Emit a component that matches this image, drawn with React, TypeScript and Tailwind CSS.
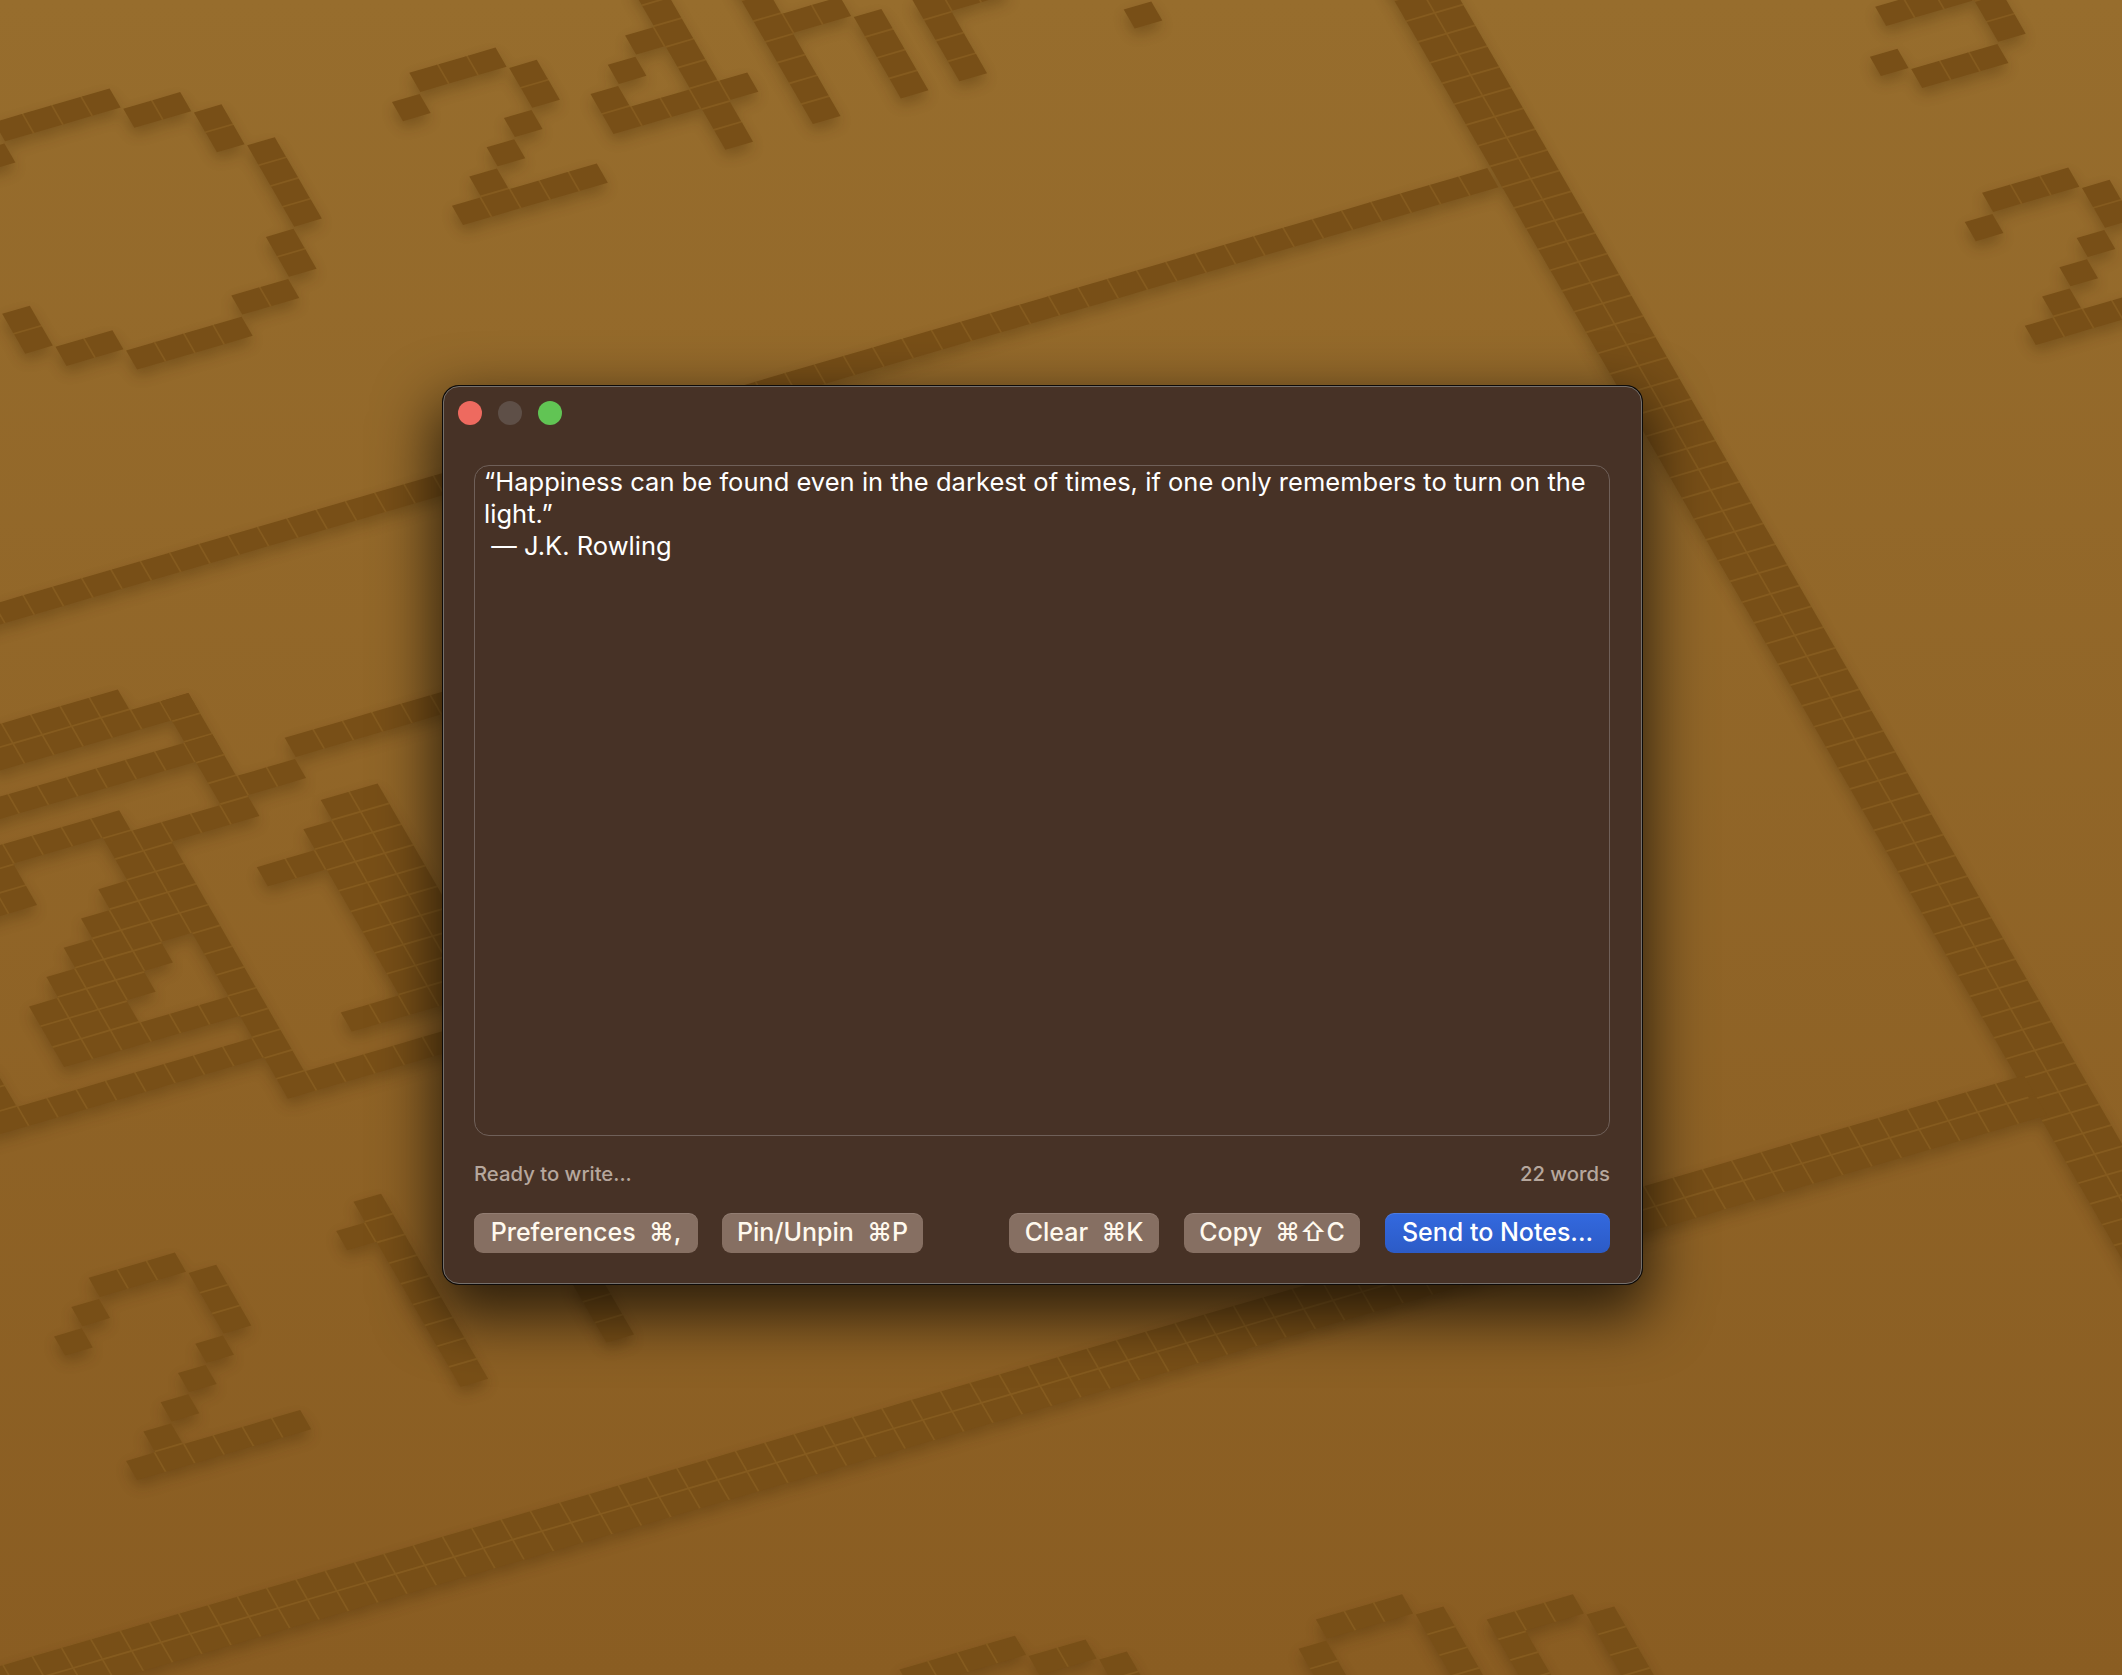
import React from "react";

const U = [29.3, -8.55];
const V = [12, 20.75];
const SU = 0.47;
const SV = 0.46;

type Group = { x: number; y: number; cells: [number, number][] };

const parse = (s: string): [number, number][] =>
  s
    .trim()
    .split(/\s+/)
    .map((p) => {
      const [a, b] = p.split(",").map(Number);
      return [a, b] as [number, number];
    });

const rangeI = (from: number, to: number, j: number): [number, number][] => {
  const out: [number, number][] = [];
  for (let i = from; i <= to; i++) out.push([i, j]);
  return out;
};
const rangeJ = (i: number, from: number, to: number): [number, number][] => {
  const out: [number, number][] = [];
  for (let j = from; j <= to; j++) out.push([i, j]);
  return out;
};

const TWO = "0,0 1,0 2,0 3,1 3,2 2,3 1,4 0,5 -1,6 0,6 1,6 2,6 3,6 -1,1";

const groups: Group[] = [
  { x: 13.4, y: 127.7, cells: parse("0,0 1,0 2,0 3,0 4,1 5,1 6,2 6,3 7,4 7,5 7,6 7,7 6,8 6,9 5,10 4,10 3,11 2,11 1,11 0,11 -1,10 -2,10 -3,9 -3,8 -1,1") },
  { x: 428.6, y: 78.3, cells: parse(TWO) },
  { x: 661.7, y: 11.7, cells: parse("0,-1 0,0 0,1 -1,1 0,2 -2,2 0,3 -3,3 0,4 1,4 -1,4 -2,4 -3,4 0,5 0,6") },
  { x: 761.2, y: 6.7, cells: parse("0,-1 0,0 0,1 0,2 0,3 0,4 0,5 1,1 2,1 3,2 3,3 3,4 3,5 5,2 5,3 5,4 5,5 6,2 7,2") },
  { x: 1143, y: 15, cells: parse("0,0") },
  { x: 1894.5, y: 12.3, cells: parse("0,0 1,0 2,0 3,0 3,1 3,2 -1,2 0,3 1,3 2,3") },
  { x: 2001.4, y: 198.3, cells: parse(TWO) },
  { x: 1455.3, y: 19, cells: [...rangeJ(-1, -2, 60), ...rangeJ(0, -2, 60)] },
  { x: 1479, y: 181.7, cells: rangeI(-52, 0, 0) },
  { x: 843.6, y: 1431, cells: [...rangeI(-32, 40, 0), ...rangeI(-32, 40, 1)] },
  {
    x: 304,
    y: 743.3,
    cells: [
      ...rangeI(0, 6, 0),
      ...rangeI(-9, -5, -4),
      ...rangeI(-9, -3, -3),
      ...rangeJ(-3, -3, 2),
      ...rangeI(-10, -3, -1),
      ...rangeI(-2, -1, 1),
      ...rangeI(-11, -7, 1),
      ...rangeI(-7, -4, 2),
      ...rangeJ(-7, 3, 6),
      ...rangeJ(-6, 3, 14),
      ...rangeJ(-8, 4, 7),
      ...rangeJ(-9, 5, 8),
      ...rangeJ(-10, 6, 10),
      ...rangeJ(-11, 7, 10),
      ...rangeJ(-12, 8, 10),
      ...rangeI(-9, -7, 10),
      ...parse("-11,2 -11,3 -12,3 -15,10 -15,11"),
      ...rangeI(-16, -7, 12),
      ...rangeI(-5, 1, 14),
      ...rangeJ(-1, 4, 12),
      ...rangeJ(0, 3, 12),
      ...rangeJ(1, 3, 12),
      ...parse("-3,5 -2,5 -3,12 -2,12"),
    ],
  },
  { x: 108, y: 1283.3, cells: parse("0,0 1,0 2,0 3,1 3,2 3,3 2,4 1,5 0,6 -1,7 -2,8 -1,8 0,8 1,8 2,8 3,8 -1,1 -2,2") },
  { x: 372.8, y: 1207.3, cells: [...rangeJ(0, 0, 8), [-1, 1]] },
  { x: 602.7, y: 1308.3, cells: parse("0,-1 0,0 0,1") },
  { x: 1006.7, y: 1649.3, cells: parse("-3,0 -2,0 -1,0 0,0 1,1 2,1 3,2 3,3") },
  { x: 1335.2, y: 1625, cells: parse("0,0 1,0 2,0 3,1 3,2 3,3 3,4 -1,1 -1,2 -1,3") },
  { x: 1506, y: 1625, cells: parse("0,0 1,0 2,0 3,1 3,2 3,3 3,4 0,1 0,2 0,3") },
];

function quad(g: Group, ci: number, cj: number, a: number, b: number) {
  const cx = g.x + ci * U[0] + cj * V[0];
  const cy = g.y + ci * U[1] + cj * V[1];
  const c = (p: number, q: number) =>
    `${(cx + p * a * U[0] + q * b * V[0]).toFixed(1)},${(cy + p * a * U[1] + q * b * V[1]).toFixed(1)}`;
  return `${c(-1, -1)} ${c(1, -1)} ${c(1, 1)} ${c(-1, 1)}`;
}

function gapStrips(g: Group) {
  const has = new Set(g.cells.map(([i, j]) => `${i},${j}`));
  const out: string[] = [];
  for (const [i, j] of g.cells) {
    const r = has.has(`${i + 1},${j}`);
    const d = has.has(`${i},${j + 1}`);
    if (r) out.push(quad(g, i + 0.5, j, 0.06, SV));
    if (d) out.push(quad(g, i, j + 0.5, SU, 0.07));
    if (r && d && has.has(`${i + 1},${j + 1}`)) out.push(quad(g, i + 0.5, j + 0.5, 0.06, 0.07));
  }
  return out;
}

function Wallpaper() {
  return (
    <svg className="absolute inset-0" width="2122" height="1675" viewBox="0 0 2122 1675" aria-hidden="true">
      <defs>
        <filter id="cellBlur" x="-5%" y="-5%" width="110%" height="110%">
          <feGaussianBlur stdDeviation="7" />
        </filter>
      </defs>
      <g filter="url(#cellBlur)" fill="#3a2200" opacity="0.3" transform="translate(0 7)">
        {groups.map((g, k) =>
          g.cells.map(([i, j]) => <polygon key={`s${k}-${i}-${j}`} points={quad(g, i, j, SU, SV)} />)
        )}
      </g>
      <g fill="#855b1f">
        {groups.map((g, k) => gapStrips(g).map((p, n) => <polygon key={`g${k}-${n}`} points={p} />))}
      </g>
      <g fill="#784f17">
        {groups.map((g, k) =>
          g.cells.map(([i, j]) => <polygon key={`c${k}-${i}-${j}`} points={quad(g, i, j, SU, SV)} />)
        )}
      </g>
    </svg>
  );
}

function Key({ children, primary, className }: { children: React.ReactNode; primary?: boolean; className: string }) {
  return (
    <button
      className={`${className} h-10 pb-[1px] flex items-center justify-center rounded-[9px] text-[25px] font-[450] leading-none whitespace-pre ${
        primary
          ? "bg-linear-to-b from-[#3369df] to-[#2c5bc6] text-white shadow-[inset_0_1px_0_rgba(255,255,255,0.12)]"
          : "bg-[#866f62] text-[#fff9ee] shadow-[inset_0_1px_0_rgba(255,255,255,0.1)]"
      }`}
    >
      {children}
    </button>
  );
}

export default function App() {
  return (
    <div
      className="relative w-[2122px] h-[1675px] overflow-hidden bg-linear-to-b from-[#976d2d] to-[#8a5d22] pt-[386px] pl-[443px]"
      style={{ fontFamily: 'Inter, "DejaVu Sans", sans-serif' }}
    >
      <Wallpaper />
      <div className="relative w-[1199px] h-[898px] rounded-[16px] bg-[#473226] border border-[#75706c] shadow-[0_0_0_1px_#0d0a08,0_24px_60px_8px_rgba(0,0,0,0.68)] flex flex-col pt-[14px] pl-[30px] pr-[31px]">
        <div className="flex gap-4 -ml-[16px]">
          <span className="w-6 h-6 rounded-full bg-[#ee6a5f]" />
          <span className="w-6 h-6 rounded-full bg-[#5e4f47]" />
          <span className="w-6 h-6 rounded-full bg-[#61c454]" />
        </div>
        <div className="mt-[40px] h-[671px] rounded-[15px] border border-[#6f6059] px-[9px] text-white text-[25.5px] font-[425] tracking-[0.025px] leading-[31.8px] whitespace-pre-wrap">
          {"“Happiness can be found even in the darkest of times, if one only remembers to turn on the light.”\n — J.K. Rowling"}
        </div>
        <div className="mt-[24px] flex justify-between text-[#b6a79d] text-[20.3px] font-[450] leading-[28px]">
          <span>Ready to write...</span>
          <span>22 words</span>
        </div>
        <div className="mt-[25px] flex justify-between">
          <div className="flex gap-6">
            <Key className="w-[224px]">{"Preferences  ⌘,"}</Key>
            <Key className="w-[201px]">{"Pin/Unpin  ⌘P"}</Key>
          </div>
          <div className="flex gap-[25px]">
            <Key className="w-[150px]">{"Clear  ⌘K"}</Key>
            <Key className="w-[176px]">{"Copy  ⌘⇧C"}</Key>
            <Key className="w-[225px]" primary>
              {"Send to Notes..."}
            </Key>
          </div>
        </div>
      </div>
    </div>
  );
}
